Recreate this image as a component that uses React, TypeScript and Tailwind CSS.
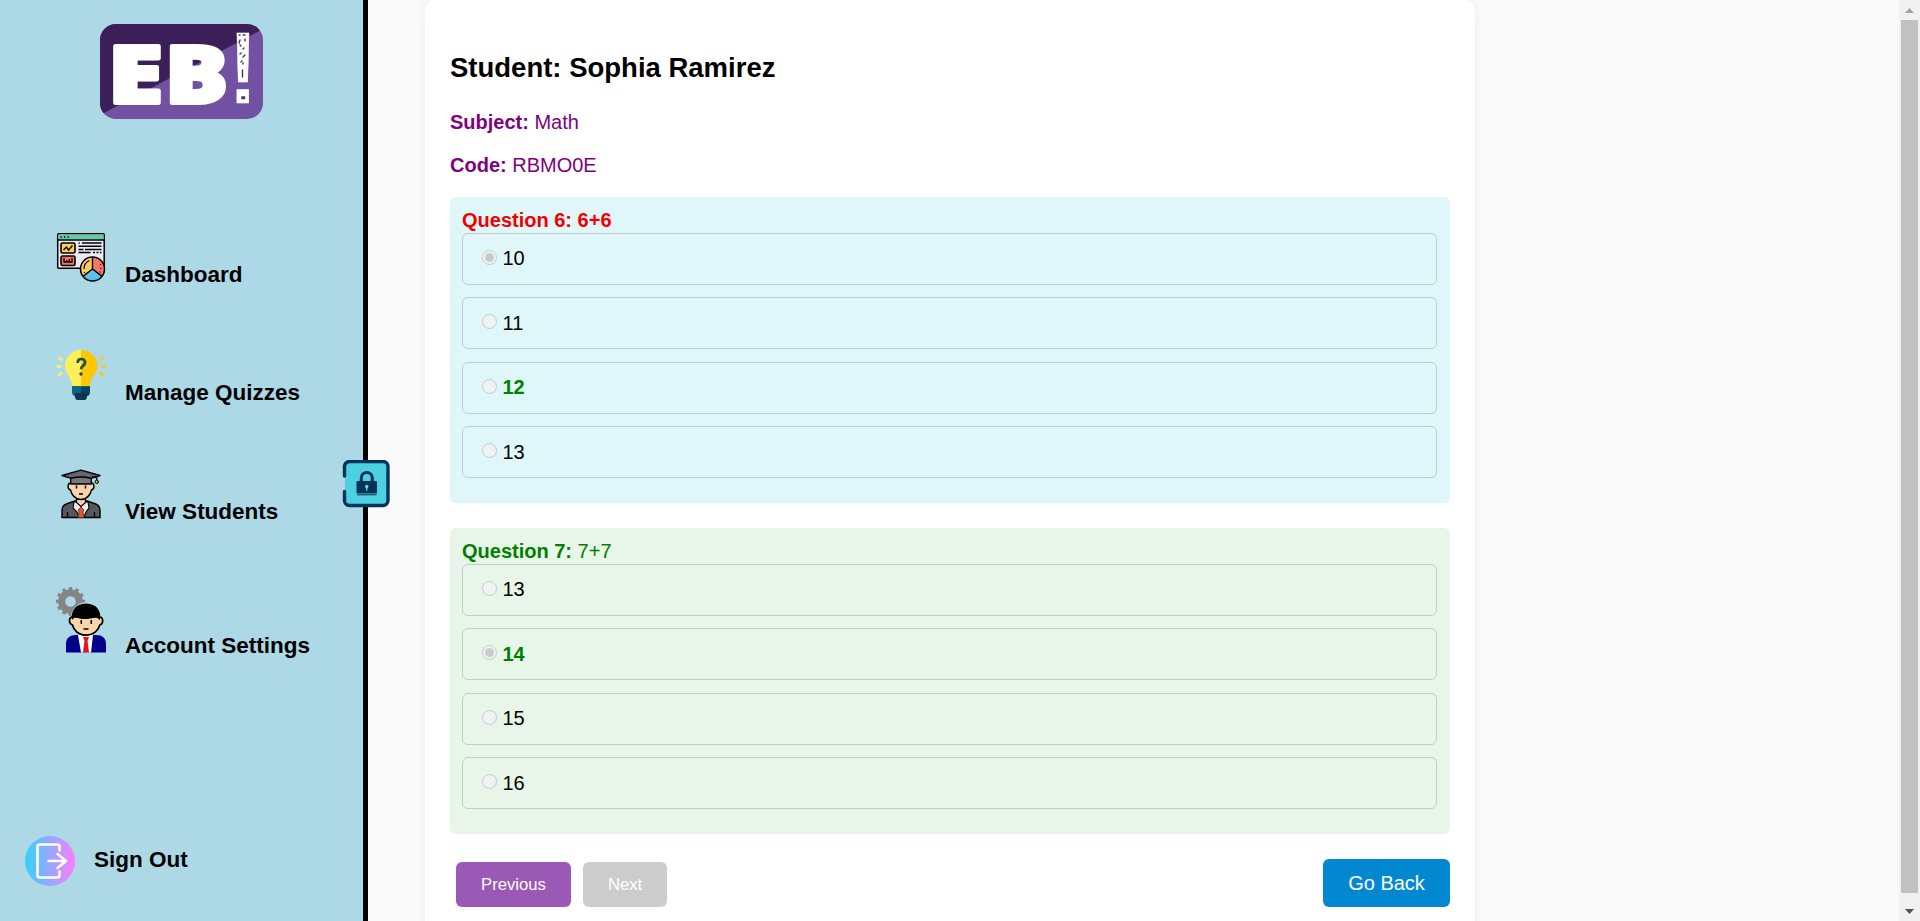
import React from "react";

function Logo() {
  return (
    <svg width="163" height="95" viewBox="0 0 163 95" className="block overflow-visible">
      <defs>
        <clipPath id="logo-shape">
          <rect width="163" height="95" rx="16" />
        </clipPath>
      </defs>
      <g clipPath="url(#logo-shape)">
        <rect width="163" height="95" fill="#7251a2" />
        <path d="M0 0H154L163 5L0 91Z" fill="#3c1f58" />
      </g>
      <g fill="#fff" stroke="#fff" strokeLinejoin="round" fontWeight="800">
        <g strokeWidth="4" fontFamily="'Open Sans', sans-serif">
          <text x="8" y="78.500" fontSize="79" textLength="55" lengthAdjust="spacingAndGlyphs">E</text>
          <text x="65" y="78.500" fontSize="79" textLength="63" lengthAdjust="spacingAndGlyphs">B</text>
        </g>
        <text x="129" y="78.500" fontSize="102" strokeWidth="0.500" fontFamily="'Liberation Sans', sans-serif" textLength="28" lengthAdjust="spacingAndGlyphs">!</text>
      </g>
      <g fill="none" stroke="#4a3070" strokeWidth="1.400" strokeLinecap="round">
        <path d="M139 11h1M143 11h2M140 16l-1 3M145 15v2M140 21l1 1M144 24l-1 1M141 29l-1 1M145 31l-2 2M141 38l1-1M143 40v-1M142.500 46v7M142 73h2.500v1.500h-2.500z" />
      </g>
    </svg>
  );
}

function DashboardIcon() {
  return (
    <svg width="50" height="50" viewBox="0 0 50 50" className="-mb-[2px] block shrink-0">
      <rect x="1.7" y="1.7" width="46.5" height="34.5" rx="1" fill="#eceaf4" stroke="#000" strokeWidth="1.5" />
      <path d="M2.4 2.4h45.2v5H2.4z" fill="#62cba7" />
      <path d="M1.7 8H48" stroke="#000" strokeWidth="1.3" />
      <path d="M4.5 5h1.3M8 5h1.3M11.5 5h1.3" stroke="#000" strokeWidth="1.3" />
      <rect x="5" y="11" width="14" height="10" rx="1.5" fill="#fdcb61" stroke="#000" strokeWidth="1.6" />
      <path d="M7.5 18l3-3 2 3 4-4.500" fill="none" stroke="#000" strokeWidth="1.4" />
      <rect x="5" y="24" width="14" height="9.500" rx="1.500" fill="#f77668" stroke="#000" strokeWidth="1.6" />
      <path d="M8 26v4h8v-4M10.700 30v-2M13.300 30v-3" fill="none" stroke="#000" strokeWidth="1.3" />
      <path d="M22.500 11h1.300M26 11h19.500M22.500 14.200h23M22.500 17.400h5M29 17.400h16.500M22.500 20.500h12M37 20.500h2M40.500 20.500h2M44 20.500h1.500" stroke="#000" strokeWidth="1.5" />
      <circle cx="36.500" cy="37" r="12" fill="#5bc2ee" />
      <path d="M36.500 37V25A12 12 0 0 0 27 44.400Z" fill="#fdcb61" />
      <path d="M36.500 37V25A12 12 0 0 1 46 44.400Z" fill="#f77668" />
      <path d="M36.500 25v12L27 44.400M36.500 37l9.500 7.400" fill="none" stroke="#000" strokeWidth="1.400" />
      <path d="M28 37c0-4 2-7 5.500-8.500M28.500 40v1M44.500 32v1M44.800 36v1M44 39.500v1" fill="none" stroke="#000" strokeWidth="1.200" />
      <circle cx="36.500" cy="37" r="12" fill="none" stroke="#000" strokeWidth="1.500" />
    </svg>
  );
}

function QuizIcon() {
  return (
    <svg width="50" height="50" viewBox="0 0 50 50" className="-mb-[2px] block shrink-0">
      <path d="M25 0C16 0 9 7 9 16c0 8 7 11 7 20h9Z" fill="#fff05a" />
      <path d="M25 0c9 0 16.500 7 16.500 16 0 8-7.500 11-7.500 20h-9Z" fill="#fdc800" />
      <path d="M16 36h9v14h-3c-2 0-3-2-3-4-2 0-3-2-3-4Z" fill="#0c6381" />
      <path d="M25 36h9v6c0 2-1 4-3 4 0 2-1 4-3 4h-3Z" fill="#0a4059" />
      <path d="M19 43h12v3c0 2-1 4-3 4h-6c-2 0-3-2-3-4Z" fill="#083850" />
      <path d="M16 36h18v1H16z" fill="#087078" />
      <path d="M21.700 13c0-2.600 1.600-4 3.600-4 2.200 0 3.800 1.500 3.800 3.500 0 3-4 3.300-4 6.700" fill="none" stroke="#155044" strokeWidth="2.700" />
      <circle cx="25" cy="24" r="1.700" fill="#155044" />
      <path d="M1.500 16.500H4M3.500 8l2 1.200M3 24.800l2.500-1.500" stroke="#f4ed72" strokeWidth="2.800" strokeLinecap="round" />
      <path d="M46 16.500h2.500M46.500 8l-2 1.200M47 24.800l-2.500-1.500" stroke="#f1ca31" strokeWidth="2.800" strokeLinecap="round" />
    </svg>
  );
}

function StudentIcon() {
  return (
    <svg width="50" height="50" viewBox="0 0 50 50" className="-mb-[2px] block shrink-0">
      <path d="M6 48.500V41c0-4 3-6 7-7l6-2h12l6 2c4 1 7 3 7 7v7.500Z" fill="#57575e" stroke="#000" strokeWidth="1.400" />
      <path d="M18 33l-1 6 4 4 2 5h5l2-5 3-4-1-6Z" fill="#eeeef3" stroke="#000" strokeWidth="1.100" />
      <path d="M20.500 29v4.500l4.500 4 4.500-4V29" fill="#fbd4ae" stroke="#000" strokeWidth="1.200" />
      <path d="M25 38l-3 3 1 2-1 5.500h6L27 43l1-2Z" fill="#e65432" stroke="#64251b" strokeWidth=".8" />
      <path d="M11.500 43v5M38.500 43v5" stroke="#000" strokeWidth="1.300" />
      <path d="M14.500 14c-3 0-3.500 6.500 0 7 1 5 5 9.500 10.500 9.500S34.500 26 35.500 21c3.500-.5 3-7 0-7Z" fill="#fbd4ae" stroke="#000" strokeWidth="1.400" />
      <path d="M14.700 7v8h20.600V7Z" fill="#77777d" stroke="#000" strokeWidth="1.300" />
      <path d="M6 6.500L25 1.200l19 5.300-9 2.800c-6-1.600-14-1.600-20 0Z" fill="#66666d" stroke="#000" strokeWidth="1.400" strokeLinejoin="round" />
      <path d="M36 7.500l4.800 1.300V11" fill="none" stroke="#000" strokeWidth="1.200" />
      <circle cx="40.800" cy="12.800" r="1.700" fill="#b0b442" stroke="#000" />
      <path d="M20.500 16.500v3M29.500 16.500v3M23 25h4" stroke="#000" strokeWidth="1.500" />
    </svg>
  );
}

const GEAR_ANGLES = [0, 30, 60, 90, 120, 150, 180, 210, 240, 270, 300, 330];

function AccountIcon() {
  return (
    <svg width="50" height="67" viewBox="0 0 50 67" className="-mb-[2px] block shrink-0">
      <circle cx="14.500" cy="15.500" r="8.800" fill="none" stroke="#858585" strokeWidth="7" />
      {GEAR_ANGLES.map((a) => (
        <rect key={a} x="12.800" y="1" width="3.400" height="4" fill="#858585" transform={`rotate(${a} 14.500 15.500)`} />
      ))}
      <circle cx="30.500" cy="31.500" r="15.500" fill="#add8e6" />
      <path d="M10 66.500V58c0-6 4-9 10-9h20c6 0 10 3 10 9v8.500Z" fill="#00008b" />
      <path d="M22 49h15l-2 17.500H25Z" fill="#fff" />
      <path d="M27 51h6l-1.500 4L33 66.500h-6L28.500 55Z" fill="#e90f20" />
      <path d="M15.800 31c-3 .5-3.400 7 .7 8 1 5 6 10.200 13.700 10.200S42.500 44 43.800 39c4-1 3.500-7.500.4-8Z" fill="#fbd5ac" stroke="#000" strokeWidth="1.700" />
      <path d="M16 34c-1.500-8 3-16.500 14-16.500S45.700 26 44 34l-4-3c-8 3-16 2.500-21 0Z" fill="#000" />
      <path d="M25.300 34v4M35.300 34v4M27.500 43h5" stroke="#000" strokeWidth="1.500" />
    </svg>
  );
}

function SignOutIcon() {
  return (
    <svg width="50" height="50" viewBox="0 0 50 50" className="block shrink-0">
      <defs>
        <linearGradient id="exit-fill">
          <stop offset="0" stopColor="#35d1fe" />
          <stop offset="1" stopColor="#fc7dff" />
        </linearGradient>
      </defs>
      <circle cx="25" cy="25" r="25" fill="url(#exit-fill)" />
      <g fill="none" stroke="#fff" strokeWidth="2.600" strokeLinecap="round" strokeLinejoin="round">
        <path d="M34.500 14.500V10.500a2 2 0 0 0-2-2H14.500a2 2 0 0 0-2 2v29a2 2 0 0 0 2 2H32.500a2 2 0 0 0 2-2v-4" />
        <path d="M23.500 25H41M32.500 18l8.500 7-8.500 7" />
      </g>
    </svg>
  );
}

function LockIcon() {
  return (
    <svg width="48" height="48" viewBox="0 0 48 48" className="block">
      <rect x="3" y="2" width="43" height="43" rx="5" fill="#4dd0e1" />
      <path d="M2.500 16V6.500a5 5 0 0 1 5-5h33.500a5 5 0 0 1 5 5v34a5 5 0 0 1-5 5H7.500a5 5 0 0 1-5-5V31.500" fill="none" stroke="#04335a" strokeWidth="3.400" strokeLinecap="round" />
      <path d="M19.300 21.500v-3.500a5.500 5.500 0 0 1 11 0v3.500" fill="none" stroke="#04335a" strokeWidth="3" />
      <rect x="14.500" y="21" width="20.500" height="12.500" rx="1" fill="#04335a" />
      <path d="M15 34.800h19.500" stroke="#04335a" strokeWidth="1" />
      <circle cx="24.700" cy="26.500" r="1.700" fill="#70d7e4" />
      <path d="M24.700 26.500v4" stroke="#70d7e4" strokeWidth="1.400" />
    </svg>
  );
}

type Quiz = { no: number; text: string; options: string[]; chosen: number; answer: number; right: boolean };

const QUESTIONS: Quiz[] = [
  { no: 6, text: "6+6", options: ["10", "11", "12", "13"], chosen: 0, answer: 2, right: false },
  { no: 7, text: "7+7", options: ["13", "14", "15", "16"], chosen: 1, answer: 1, right: true },
];

function Radio({ on }: { on: boolean }) {
  return (
    <span className="mb-[3px] flex size-[15px] items-center justify-center rounded-full border border-[#c6caca] bg-[#eff3f4]">
      {on && <span className="size-[9px] rounded-full bg-[#c8cbcb]" />}
    </span>
  );
}

function QuestionCard({ q }: { q: Quiz }) {
  return (
    <section className={`mb-[25px] h-[306px] rounded-[6px] pt-[12px] pr-[13px] pl-[12px] ${q.right ? "bg-[#e8f5e9]" : "bg-[#e0f7fa]"}`}>
      <p className={`h-[23.9px] leading-[23px] ${q.right ? "text-[#008000]" : "font-bold text-[#f00000]"}`}>
        <strong>Question {q.no}:</strong> {q.text}
      </p>
      <ul className="flex flex-col gap-[12.5px]">
        {q.options.map((o, i) => (
          <li key={o} className="flex h-[52px] items-center gap-[5.5px] rounded-[6px] border border-[#c5c9ca] pl-[19px]">
            <Radio on={i === q.chosen} />
            <span className={i === q.answer ? "font-bold text-[#008000]" : "text-black"}>{o}</span>
          </li>
        ))}
      </ul>
    </section>
  );
}

function NavItem({ icon, label, className }: { icon: React.ReactNode; label: string; className: string }) {
  return (
    <a className={`flex items-baseline gap-[19px] ${className}`}>
      {icon}
      <span className="leading-[26px]">{label}</span>
    </a>
  );
}

export default function App() {
  return (
    <div className="flex h-[921px] w-[1920px] overflow-hidden bg-[#fafafa] font-['Liberation_Sans',Arial,sans-serif] text-[20px] leading-[23px] text-black">
      <aside className="relative flex w-[368px] shrink-0 flex-col border-r-[5px] border-black bg-[#add8e6] text-[22.5px] font-bold">
        <div className="pt-[24px] pl-[100px]">
          <Logo />
        </div>
        <nav className="flex flex-col pt-[113px] pl-[56px]">
          <NavItem icon={<DashboardIcon />} label="Dashboard" className="h-[118px]" />
          <NavItem icon={<QuizIcon />} label="Manage Quizzes" className="h-[119px]" />
          <NavItem icon={<StudentIcon />} label="View Students" className="h-[117px]" />
          <NavItem icon={<AccountIcon />} label="Account Settings" className="h-[67px]" />
        </nav>
        <a className="mt-auto mb-[35px] flex items-center gap-[19px] pl-[25px]">
          <SignOutIcon />
          <span className="-mt-[2px] leading-[26px]">Sign Out</span>
        </a>
        <button className="absolute top-[460px] left-[342px]">
          <LockIcon />
        </button>
      </aside>

      <main className="flex min-w-0 flex-1 pl-[57px]">
        <div className="h-[940px] w-[1050px] rounded-[10px] bg-white px-[25px] pt-[52px] shadow-[0_0_12px_rgba(0,0,0,0.06)]">
          <h1 className="text-[27.5px] leading-[32px] font-bold">Student: Sophia Ramirez</h1>
          <p className="mt-[27px] text-[#800080]"><strong>Subject:</strong> Math</p>
          <p className="mt-[20px] text-[#800080]"><strong>Code:</strong> RBMO0E</p>
          <div className="mt-[20px]">
            {QUESTIONS.map((q) => (
              <QuestionCard key={q.no} q={q} />
            ))}
          </div>
          <div className="flex items-start justify-between">
            <div className="flex gap-[12px] pt-[3px] pl-[6px] text-[16.67px] text-white">
              <button className="h-[45px] w-[115px] rounded-[6px] bg-[#9b59b6]">Previous</button>
              <button className="h-[45px] w-[84px] rounded-[6px] bg-[#cccccc]">Next</button>
            </div>
            <button className="h-[48px] w-[127px] rounded-[6px] bg-[#0288d1] text-white">Go Back</button>
          </div>
        </div>
      </main>

      <div className="flex w-[21px] shrink-0 flex-col items-center justify-between bg-[#f1f1f1]">
        <svg width="21" height="20" viewBox="0 0 21 20" className="block">
          <path d="M6 13h9L10.500 8Z" fill="#a3a3a3" />
        </svg>
        <div className="w-[17px] flex-1 bg-[#c1c1c1]" />
        <svg width="21" height="28" viewBox="0 0 21 28" className="block">
          <path d="M6 16h9l-4.500 5Z" fill="#505050" />
        </svg>
      </div>
    </div>
  );
}
